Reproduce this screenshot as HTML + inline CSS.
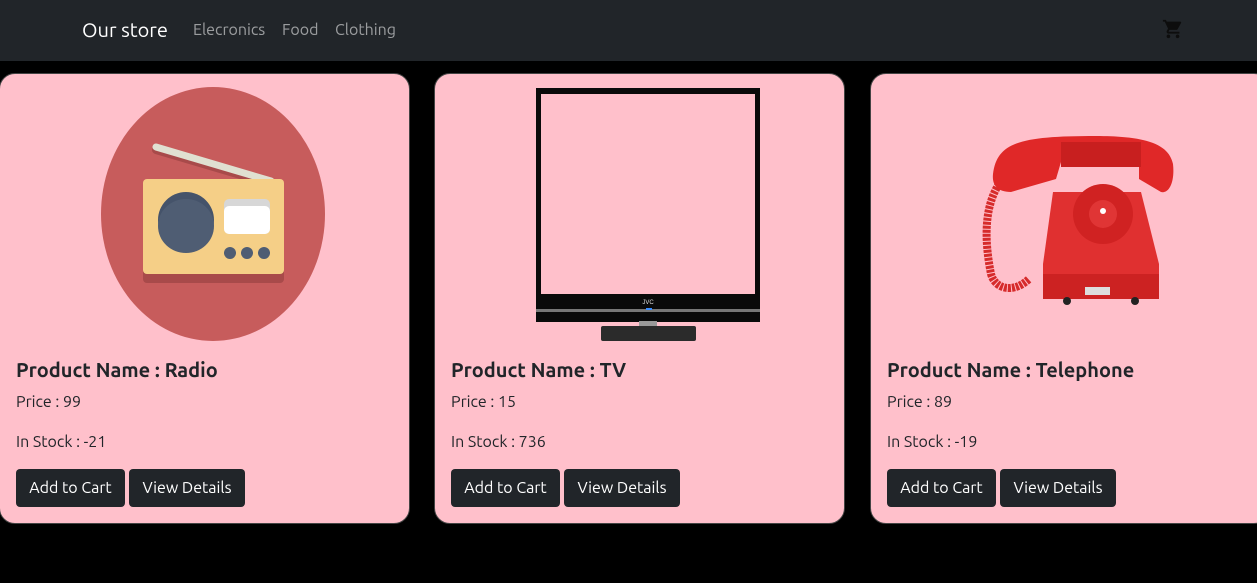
<!DOCTYPE html>
<html><head><style>
*{box-sizing:border-box;margin:0;padding:0}
body{width:1257px;height:583px;background:#000;font-family:"Ubuntu","Liberation Sans","DejaVu Sans",sans-serif;overflow:hidden;position:relative}
.nav{position:absolute;left:0;top:0;width:1257px;height:61px;background:#212529}
.brand{position:absolute;left:82px;top:18px;color:#fff;font-size:20px}
.link{position:absolute;top:21px;color:rgba(255,255,255,.55);font-size:16px}
.card{position:absolute;top:73px;width:411px;height:451px;background:#ffc0cb;border:1px solid #444;border-radius:16px;overflow:hidden}
.card svg{position:absolute;left:0;top:0}
.t{position:absolute;left:16px;top:284px;font-size:20px;font-weight:bold;color:#212529}
.p{position:absolute;left:16px;top:319px;font-size:16px;color:#212529}
.s{position:absolute;left:16px;top:359px;font-size:16px;color:#212529}
.b{position:absolute;top:395px;height:38px;background:#212529;color:#fff;font-size:16px;border-radius:4px;line-height:38px;text-align:center}
</style></head><body>
<div class="nav">
<div class="brand">Our store</div>
<div class="link" style="left:193px">Elecronics</div>
<div class="link" style="left:282px">Food</div>
<div class="link" style="left:335px">Clothing</div>
<svg style="position:absolute;left:1162px;top:18px" width="22" height="22" viewBox="0 0 24 24"><path fill="#0d0d0d" d="M7 18c-1.1 0-2 .9-2 2s.9 2 2 2 2-.9 2-2-.9-2-2-2zM1 2v2h2l3.6 7.6-1.4 2.4c-.1.3-.2.6-.2 1 0 1.1.9 2 2 2h12v-2H7.4c-.1 0-.2-.1-.2-.2v-.1l.9-1.7h7.4c.8 0 1.4-.4 1.7-1l3.6-6.5c.1-.2.1-.3.1-.5 0-.6-.4-1-1-1H5.2l-.9-2H1zm16 16c-1.1 0-2 .9-2 2s.9 2 2 2 2-.9 2-2-.9-2-2-2z"/></svg>
</div>

<div class="card" style="left:-1px">
<svg width="411" height="280">
<ellipse cx="213" cy="140" rx="112" ry="127" fill="#c75c5c"/>
<line x1="156" y1="76" x2="271" y2="110" stroke="#a84a4a" stroke-width="8" stroke-linecap="round"/>
<line x1="156" y1="73" x2="271" y2="107" stroke="#e0e0d1" stroke-width="7" stroke-linecap="round"/>
<rect x="143" y="110" width="141" height="99" rx="4" fill="#a84a4a"/>
<rect x="143" y="105" width="141" height="95" rx="4" fill="#f5cf87"/>
<ellipse cx="186" cy="146" rx="28" ry="28" fill="#45536a"/>
<ellipse cx="186" cy="152" rx="28" ry="27" fill="#4f5d73"/>
<rect x="224" y="125" width="46" height="35" rx="5" fill="#d7d7d7"/>
<rect x="224" y="132" width="46" height="28" rx="5" fill="#fff"/>
<g fill="#4f5d73"><circle cx="230" cy="179" r="6"/><circle cx="247" cy="179" r="6"/><circle cx="264" cy="179" r="6"/></g>
</svg>
<div class="t">Product Name : Radio</div><div class="p">Price : 99</div><div class="s">In Stock : -21</div>
<div class="b" style="left:16px;width:109px">Add to Cart</div><div class="b" style="left:129px;width:116px">View Details</div>
</div>

<div class="card" style="left:434px">
<svg width="411" height="280">
<rect x="101" y="14" width="224" height="234" fill="#0a0a0a"/>
<rect x="106" y="20" width="214" height="200" fill="#ffc0cb"/>
<rect x="101" y="235" width="224" height="3" fill="#777"/>
<rect x="211" y="234" width="6" height="2" fill="#3a8dff"/>
<rect x="204" y="247" width="18" height="8" fill="#999"/>
<rect x="166" y="252" width="95" height="15" rx="2" fill="#2b2b2b"/>
<text x="213" y="230" fill="#ddd" font-size="6" text-anchor="middle" font-family="Liberation Sans">JVC</text>
</svg>
<div class="t">Product Name : TV</div><div class="p">Price : 15</div><div class="s">In Stock : 736</div>
<div class="b" style="left:16px;width:109px">Add to Cart</div><div class="b" style="left:129px;width:116px">View Details</div>
</div>

<div class="card" style="left:870px;width:400px">
<svg width="400" height="280">
<path d="M128 110 C112 135 114 170 120 200 C124 215 142 220 158 205" stroke="#d62b2b" stroke-width="8" fill="none" stroke-dasharray="3 1"/>
<path d="M182 118 L270 118 L288 190 L288 225 L172 225 L172 190 Z" fill="#e03030"/>
<rect x="172" y="200" width="116" height="25" fill="#cc2222"/>
<path d="M122 100 C126 68 150 62 225 62 C280 62 298 72 302 90 C304 108 298 120 290 118 L268 105 L268 88 L190 88 L185 105 L140 118 C125 118 121 110 122 100Z" fill="#e02828"/>
<rect x="190" y="68" width="80" height="25" fill="#c81f1f"/>
<circle cx="232" cy="140" r="30" fill="#d02222"/>
<circle cx="232" cy="140" r="14" fill="#e03535"/>
<circle cx="232" cy="137" r="3" fill="#fff"/>
<rect x="214" y="213" width="25" height="8" fill="#ddd"/>
<circle cx="196" cy="227" r="4" fill="#222"/><circle cx="264" cy="227" r="4" fill="#222"/>
</svg>
<div class="t">Product Name : Telephone</div><div class="p">Price : 89</div><div class="s">In Stock : -19</div>
<div class="b" style="left:16px;width:109px">Add to Cart</div><div class="b" style="left:129px;width:116px">View Details</div>
</div>
</body></html>
